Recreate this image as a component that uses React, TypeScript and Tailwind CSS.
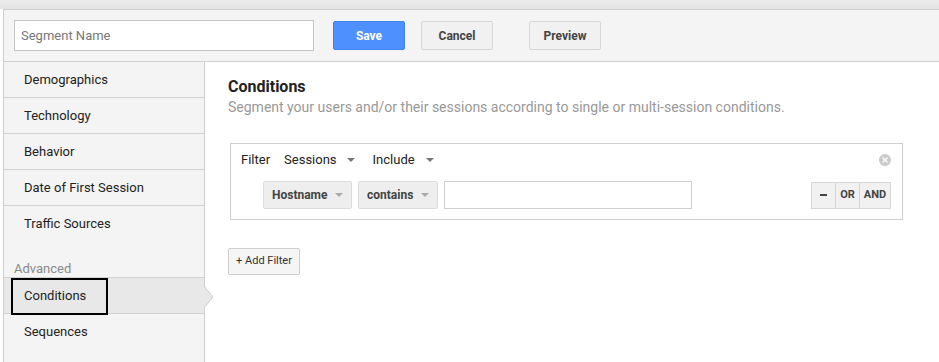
import { useState } from "react";

const sidebarItems = ["Demographics", "Technology", "Behavior", "Date of First Session", "Traffic Sources"];

function Caret({ className = "" }: { className?: string }) {
  return (
    <span
      className={`inline-block w-0 h-0 border-l-[4px] border-r-[4px] border-t-[4px] border-l-transparent border-r-transparent border-t-[#777] ${className}`}
    />
  );
}

export default function App() {
  const [name, setName] = useState("");

  return (
    <div
      className="w-[939px] h-[362px] bg-white overflow-hidden text-[#222]"
      style={{ fontFamily: "Roboto, 'Liberation Sans', Arial, sans-serif" }}
    >
      {/* top strip */}
      <div className="h-[9px] bg-gradient-to-b from-[#ececec] to-[#e4e4e4]" />

      {/* header bar */}
      <div className="ml-[3px] h-[53px] flex items-center pl-[10px] bg-[#f4f4f4] border-t border-b border-l border-[#cfcfcf]">
        <input
          value={name}
          onChange={(e) => setName(e.target.value)}
          placeholder="Segment Name"
          className="w-[300px] h-[31px] px-[6px] bg-white border border-[#c4c4c4] text-[13px] text-[#222] placeholder:text-[#777] outline-none"
        />
        <button className="ml-[19px] w-[72px] h-[29px] rounded-[2px] bg-[#4d90fe] border border-[#3f83f0] text-white text-[12px] font-bold">
          Save
        </button>
        <button className="ml-[16px] w-[72px] h-[29px] rounded-[2px] bg-[#f1f1f1] border border-[#d6d6d6] text-[#444] text-[12px] font-bold">
          Cancel
        </button>
        <button className="ml-[36px] w-[72px] h-[29px] rounded-[2px] bg-[#f1f1f1] border border-[#d6d6d6] text-[#444] text-[12px] font-bold">
          Preview
        </button>
      </div>

      <div className="flex">
        {/* sidebar */}
        <div className="relative ml-[3px] w-[202px] h-[300px] bg-[#f4f4f4] border-l border-r border-[#cfcfcf]">
          {sidebarItems.map((item, i) => (
            <div
              key={item}
              className={`h-[36px] flex items-center pl-[20px] text-[13px] ${
                i < sidebarItems.length - 1 ? "border-b border-[#d2d2d2]" : "pb-[1px]"
              }`}
            >
              {item}
            </div>
          ))}
          <div className="h-[36px] pt-[20px] pl-[10px] border-b border-[#d2d2d2] text-[13px] leading-[14px] text-[#8a8a8a]">
            Advanced
          </div>
          <div className="relative h-[36px] flex items-center pl-[20px] border-b border-[#d2d2d2] bg-[#e8e8e8] text-[13px]">
            Conditions
            <div className="absolute left-[7px] top-0 w-[97px] h-[37px] border-2 border-black" />
            {/* pointer */}
            <svg className="absolute right-[-10px] top-[8px]" width="10" height="22" viewBox="0 0 10 22">
              <path d="M0 0 L9 11 L0 22" fill="#e8e8e8" stroke="#cfcfcf" strokeWidth="1" />
            </svg>
          </div>
          <div className="h-[36px] flex items-center pl-[20px] text-[13px]">Sequences</div>
        </div>

        {/* main */}
        <div className="flex-1 pl-[23px] pt-[15px]">
          <h2 className="text-[16px] font-bold leading-[20px] text-[#222]">Conditions</h2>
          <p className="text-[14px] leading-[20px] text-[#999]">
            Segment your users and/or their sessions according to single or multi-session conditions.
          </p>

          <div className="mt-[26px] ml-[2px] w-[673px] h-[77px] border border-[#cfcfcf] px-[10px] pt-[6px]">
            <div className="flex items-center h-[20px] text-[13px] text-[#222]">
              <span>Filter</span>
              <span className="ml-[14px]">Sessions</span>
              <Caret className="ml-[10px]" />
              <span className="ml-[18px]">Include</span>
              <Caret className="ml-[11px]" />
              <span className="ml-auto mr-[1px] w-[12px] h-[12px] rounded-full bg-[#cacaca] flex items-center justify-center">
                <svg width="6" height="6" viewBox="0 0 6 6">
                  <path d="M0.5 0.5 L5.5 5.5 M5.5 0.5 L0.5 5.5" stroke="#fff" strokeWidth="1.3" />
                </svg>
              </span>
            </div>
            <div className="flex items-center mt-[11px] ml-[22px]">
              <button className="w-[89px] h-[28px] bg-[#eeeeee] border border-[#dcdcdc] rounded-[2px] flex items-center pl-[8px] text-[12px] font-bold text-[#444]">
                Hostname
                <Caret className="ml-auto mr-[8px] border-t-[#aaa]" />
              </button>
              <button className="ml-[6px] w-[80px] h-[28px] bg-[#eeeeee] border border-[#dcdcdc] rounded-[2px] flex items-center pl-[8px] text-[12px] font-bold text-[#444]">
                contains
                <Caret className="ml-auto mr-[8px] border-t-[#aaa]" />
              </button>
              <input className="ml-[6px] w-[248px] h-[28px] border border-[#cfcfcf] bg-white outline-none px-[6px] text-[13px]" />
              <div className="ml-auto mr-[1px] flex h-[27px] border border-[#d6d6d6] bg-[#f1f1f1] text-[11px] font-bold text-[#444]">
                <span className="w-[24px] flex items-center justify-center border-r border-[#d6d6d6]">
                  <span className="block w-[7px] h-[2px] bg-[#444]" />
                </span>
                <span className="w-[24px] flex items-center justify-center border-r border-[#d6d6d6]">OR</span>
                <span className="w-[30px] flex items-center justify-center">AND</span>
              </div>
            </div>
          </div>

          <button className="mt-[28px] w-[72px] h-[27px] bg-[#f5f5f5] border border-[#cfcfcf] rounded-[2px] text-[11px] text-[#333]">
            + Add Filter
          </button>
        </div>
      </div>
    </div>
  );
}
